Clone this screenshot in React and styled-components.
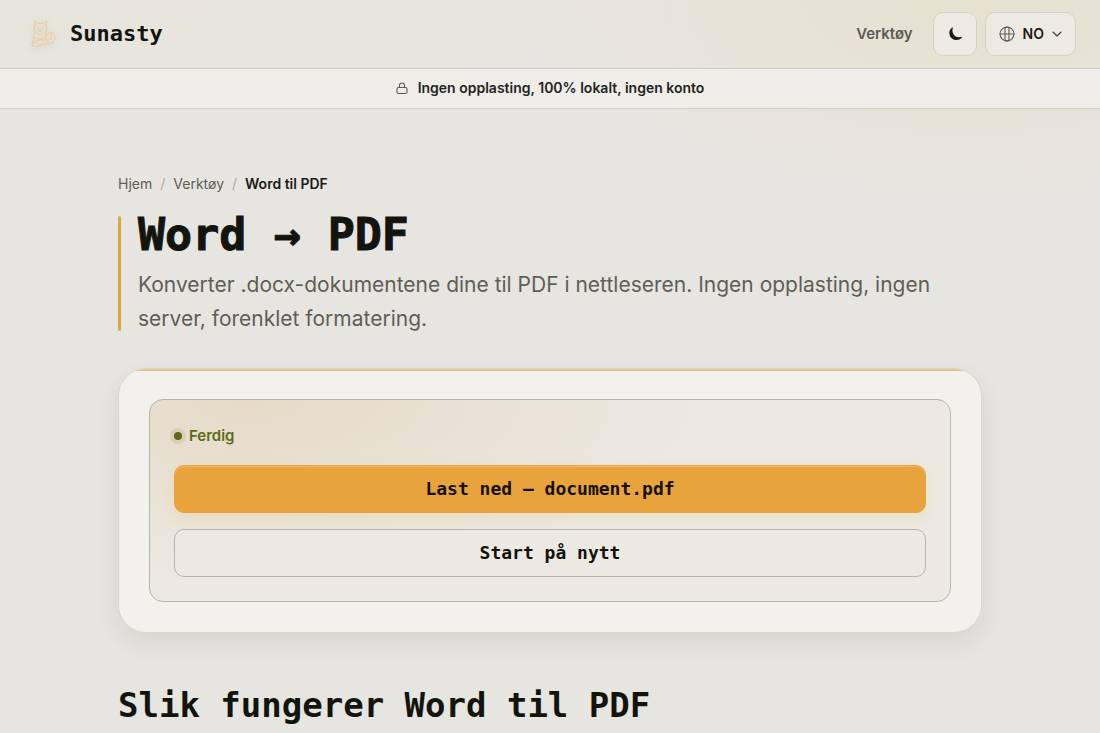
import React, { useState } from "react";
import styled, { createGlobalStyle } from "styled-components";

const GlobalStyle = createGlobalStyle`
  *, *::before, *::after {
    box-sizing: border-box;
  }

  body {
    margin: 0;
    min-height: 100vh;
    background-color: #e6e5e0;
    background-image:
      radial-gradient(ellipse 440px 210px at 88% 0, rgba(230, 222, 192, 0.5), transparent),
      radial-gradient(ellipse 600px 140px at 15% 0, rgba(232, 229, 212, 0.4), transparent);
    background-repeat: no-repeat;
    color: #14140f;
    font-family: Inter, "Liberation Sans", sans-serif;
    -webkit-font-smoothing: antialiased;
  }

  a {
    color: inherit;
    text-decoration: none;
  }
`;

const mono = `"DejaVu Sans Mono", "Liberation Mono", monospace`;

function CatLogo() {
  return (
    <CatSvg viewBox="0 0 32 32" aria-hidden="true">
      <path d="M10 6.500 9.500 3l3.500 2.500q2.500-.8 5 0L21.500 3 21 7q2 4-.5 7-2 2.500-5 2.500t-5-2.500q-2.500-3-.5-7Z" />
      <path d="M12.500 10.500q.8-.8 1.600 0M17 10.500q.8-.8 1.600 0M14.600 12.800h2l-1 1Z" />
      <path d="M10 14.500q-2.500 3-1.500 7L7 26q0 3 3 2.500l7-2 7-1q5-.5 6-5.500 0-4.500-4-5.500-3.500 0-4.500 3l-1-3" />
      <path d="M10 20q4 2.500 9-1M21 18q0 4-4 5M8.500 25l7-3.500 4 .5M26 16q2 3-.5 5.500-2 1-4 .5" />
    </CatSvg>
  );
}

function App() {
  const [dark, setDark] = useState(false);

  return (
    <>
      <GlobalStyle />
      <Header>
        <Brand href="#">
          <CatLogo />
          Sunasty
        </Brand>
        <Nav>
          <NavLink href="#verktoy">Verktøy</NavLink>
          <HeaderButton
            $square
            aria-label="Mørk modus"
            aria-pressed={dark}
            onClick={() => setDark(!dark)}
          >
            <svg width="16" height="16" viewBox="0 0 16 16" aria-hidden="true">
              <path
                fill="#1c1b17"
                d="M4.800 1.700C2.700 3.300 1.800 6 2.600 8.900c1.200 4.300 6.300 6.400 10.300 4.300.9-.5 1.700-1.200 2-1.900.2-.5-.2-.8-.7-.6-2.600 1-5.300.3-7-1.500C5.500 7.300 5 4.700 5.800 2.300c.2-.6-.5-1-1-.6Z"
              />
            </svg>
          </HeaderButton>
          <HeaderButton aria-label="Språk">
            <LineIcon width="16" height="16" viewBox="0 0 16 16">
              <circle cx="8" cy="8" r="7" />
              <rect x="6" y="1" width="4" height="14" rx="2" />
              <path d="M1 8h14" />
            </LineIcon>
            NO
            <Chevron width="10" height="10" viewBox="0 0 10 10">
              <path d="m1 3 4 4 4-4" />
            </Chevron>
          </HeaderButton>
        </Nav>
      </Header>

      <Notice>
        <LineIcon width="12" height="14" viewBox="0 0 12 14">
          <rect x="1" y="6.500" width="10" height="6" rx="1.500" />
          <path d="M3.500 6.500V4.500a2.500 2.500 0 0 1 5 0v2" />
        </LineIcon>
        Ingen opplasting, 100% lokalt, ingen konto
      </Notice>

      <Main>
        <Breadcrumb aria-label="Brødsmulesti">
          <a href="#">Hjem</a>
          <Slash>/</Slash>
          <a href="#verktoy">Verktøy</a>
          <Slash>/</Slash>
          <Current aria-current="page">Word til PDF</Current>
        </Breadcrumb>

        <Intro>
          <Title>Word → PDF</Title>
          <Lead>
            Konverter .docx-dokumentene dine til PDF i nettleseren. Ingen
            opplasting, ingen server, forenklet formatering.
          </Lead>
        </Intro>

        <Card>
          <Result>
            <Status>
              <Dot />
              Ferdig
            </Status>
            <Button $primary>Last ned — document.pdf</Button>
            <Button>Start på nytt</Button>
          </Result>
        </Card>

        <SectionTitle>Slik fungerer Word til PDF</SectionTitle>
      </Main>
    </>
  );
}

export default App;

const Header = styled.header`
  display: flex;
  align-items: center;
  justify-content: space-between;
  height: 69px;
  padding: 0 24px;
  border-bottom: 1px solid #cfcec8;
`;

const Brand = styled.a`
  display: flex;
  align-items: center;
  gap: 12px;
  font: 700 22px/32px ${mono};
`;

const CatSvg = styled.svg`
  width: 34px;
  height: 32px;
  fill: rgba(236, 226, 206, 0.5);
  stroke: #ebc997;
  stroke-width: 0.9;
  stroke-linejoin: round;
  stroke-linecap: round;
  filter: drop-shadow(0 2px 4px rgba(120, 110, 80, 0.16));
`;

const Nav = styled.nav`
  display: flex;
  align-items: center;
  gap: 8px;
`;

const NavLink = styled.a`
  margin-right: 12px;
  color: #5c5b53;
  font-size: 15px;
  font-weight: 600;
  line-height: 20px;
`;

const HeaderButton = styled.button`
  display: flex;
  align-items: center;
  justify-content: center;
  gap: 8px;
  height: 44px;
  width: ${({ $square }) => ($square ? "44px" : "auto")};
  padding: ${({ $square }) => ($square ? "0" : "0 13px")};
  border: 1px solid #d3d1c6;
  border-radius: 10px;
  background: #edeae3;
  color: #1c1b17;
  font: 600 14px/20px Inter, "Liberation Sans", sans-serif;
  cursor: pointer;
`;

const LineIcon = styled.svg`
  flex: none;
  fill: none;
  stroke: #5c5b53;
  stroke-width: 1.1;
  stroke-linecap: round;
  stroke-linejoin: round;
`;

const Chevron = styled(LineIcon)`
  stroke: #3c3b35;
`;

const Notice = styled.div`
  display: flex;
  align-items: center;
  justify-content: center;
  gap: 10px;
  height: 40px;
  padding-bottom: 1px;
  border-bottom: 1px solid #cfcec8;
  background: #eeede8;
  color: #24231e;
  font-size: 14px;
  font-weight: 600;
  line-height: 20px;
`;

const Main = styled.main`
  max-width: 912px;
  margin: 0 auto;
  padding: 64px 24px;
`;

const Breadcrumb = styled.nav`
  display: flex;
  gap: 8px;
  margin-bottom: 21px;
  color: #5f5e56;
  font-size: 14px;
  line-height: 22px;
`;

const Slash = styled.span`
  color: #a9a8a0;
`;

const Current = styled.span`
  color: #1c1b17;
  font-weight: 600;
`;

const Intro = styled.div`
  display: flex;
  flex-direction: column;
  gap: 14px;
  position: relative;
  margin-bottom: 32px;
  padding-left: 20px;

  &::before {
    content: "";
    position: absolute;
    inset: 0 auto 5px 0;
    width: 3px;
    border-radius: 2px;
    background: #e0a345;
  }
`;

const Title = styled.h1`
  margin: 0;
  font: 700 45px/38px ${mono};
  -webkit-text-stroke: 1px;
`;

const Lead = styled.p`
  margin: 0;
  color: #5f5e56;
  font-size: 21px;
  line-height: 34px;
`;

const Card = styled.section`
  position: relative;
  overflow: hidden;
  margin-bottom: 48px;
  padding: 30px;
  border: 1px solid #d8d6cf;
  border-radius: 28px;
  background: #f2f1ec;
  box-shadow: 0 10px 24px rgba(60, 60, 30, 0.09);

  &::before {
    content: "";
    position: absolute;
    inset: -1px 0 auto 0;
    height: 3px;
    background: #e9c183;
  }
`;

const Result = styled.div`
  display: flex;
  flex-direction: column;
  gap: 16px;
  padding: 24px;
  border: 1px solid #b5b4ad;
  border-radius: 14px;
  background:
    radial-gradient(ellipse 58% 90% at 12% 0, rgba(214, 184, 138, 0.3), transparent),
    #ece9e2;
`;

const Status = styled.div`
  display: flex;
  align-items: center;
  gap: 7px;
  color: #5a6b17;
  font-size: 15px;
  font-weight: 600;
  line-height: 24px;
  padding-bottom: 1px;
`;

const Dot = styled.span`
  width: 8px;
  height: 8px;
  border-radius: 50%;
  background: #5a6b17;
  box-shadow: 0 0 0 4px rgba(170, 130, 60, 0.16);
`;

const Button = styled.button`
  height: 48px;
  border: 1px solid ${({ $primary }) => ($primary ? "#e6a23c" : "#b5b4ad")};
  border-radius: 10px;
  background: ${({ $primary }) => ($primary ? "#e8a33d" : "#ece9e2")};
  box-shadow: ${({ $primary }) =>
    $primary
      ? "0 6px 16px rgba(232, 190, 90, 0.2), inset 0 1px 0 rgba(255, 255, 255, 0.28)"
      : "none"};
  color: #14110a;
  font: 700 18px/24px ${mono};
  cursor: pointer;
`;

const SectionTitle = styled.h2`
  margin: 0;
  font: 700 34px/48px ${mono};
`;
